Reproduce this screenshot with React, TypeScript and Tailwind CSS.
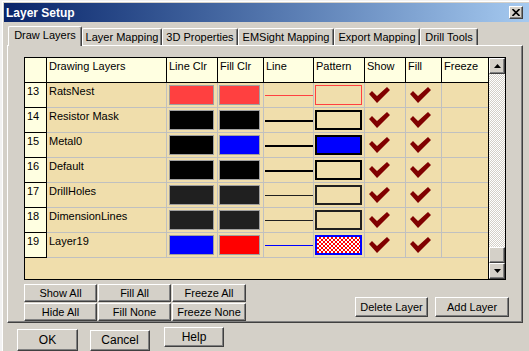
import React from "react";

const raised =
  "bg-[#D4D0C8] border border-t-white border-l-white border-r-[#404040] border-b-[#404040] shadow-[inset_-1px_-1px_0_#808080]";

type Row = {
  n: number;
  name: string;
  lc: string;
  fc: string;
  line: string;
  lineH: string;
  pat: "red" | "black" | "blue" | "dark" | "checker";
};

const rows: Row[] = [
  { n: 13, name: "RatsNest", lc: "#FF4040", fc: "#FF4040", line: "#FF4040", lineH: "h-[1px]", pat: "red" },
  { n: 14, name: "Resistor Mask", lc: "#000000", fc: "#000000", line: "#000000", lineH: "h-[2px]", pat: "black" },
  { n: 15, name: "Metal0", lc: "#000000", fc: "#0000FF", line: "#000000", lineH: "h-[2px]", pat: "blue" },
  { n: 16, name: "Default", lc: "#000000", fc: "#000000", line: "#000000", lineH: "h-[2px]", pat: "black" },
  { n: 17, name: "DrillHoles", lc: "#202020", fc: "#202020", line: "#202020", lineH: "h-[1px]", pat: "dark" },
  { n: 18, name: "DimensionLines", lc: "#202020", fc: "#202020", line: "#202020", lineH: "h-[1px]", pat: "dark" },
  { n: 19, name: "Layer19", lc: "#0000FF", fc: "#FF0000", line: "#0000FF", lineH: "h-[1px]", pat: "checker" },
];

function Check() {
  return (
    <svg width="22" height="17" viewBox="0 0 22 17" className="block">
      <path d="M0 7 L3 4 L8 9 L18 0 L21 3 L8 16 Z" fill="#800000" />
    </svg>
  );
}

function Pattern({ kind }: { kind: Row["pat"] }) {
  const base = "ml-[1px] mt-[2px] w-[47px] h-[20px]";
  if (kind === "red") return <div className={`${base} border border-[#FF4040]`} />;
  if (kind === "black") return <div className={`${base} border-2 border-black`} />;
  if (kind === "blue") return <div className={`${base} border-2 border-black bg-[#0000FF]`} />;
  if (kind === "dark") return <div className={`${base} border-2 border-[#202020]`} />;
  return (
    <div
      className={`${base} border-2 border-[#0000FF] bg-[conic-gradient(#ff0000_25%,#ffffff_0_50%,#ff0000_0_75%,#ffffff_0)] bg-[length:4px_4px]`}
    />
  );
}

function Btn({ className, children }: { className: string; children: React.ReactNode }) {
  return <div className={`${raised} flex items-center justify-center ${className}`}>{children}</div>;
}

function Tab({ sel, w, children }: { sel?: boolean; w: string; children: React.ReactNode }) {
  return (
    <div
      className={`${w} ${
        sel ? "h-[20px] -mb-[1px] relative z-10 pb-[3px]" : "h-[17px]"
      } bg-[#D4D0C8] border-t border-l border-r border-t-white border-l-white border-r-[#404040] shadow-[inset_-1px_0_0_#808080] rounded-t-[2px] flex items-center justify-center`}
    >
      {children}
    </div>
  );
}

const hdr = "h-[25px] bg-[#FFFFE1] border-b border-black px-[2px] pt-[2px]";
const cell = "h-[25px] border-b border-[#C0C0C0]";

export default function App() {
  return (
    <div className="w-[529px] h-[351px] overflow-hidden bg-[#F2F2F2] pt-[1px] pl-[2px] font-['Liberation_Sans',Arial,sans-serif] text-[11px] leading-[13px] text-black">
      <div className="h-[352px] bg-[#D4D0C8] border-t border-l border-white pt-[1px] pl-[1px] flex flex-col">
        {/* Title bar */}
        <div className="h-[19px] shrink-0 flex items-center bg-linear-to-r from-[#0A246A] to-[#A6CAF0] pl-[2px] pr-[6px]">
          <span className="text-white font-bold text-[12px] leading-[14px]">Layer Setup</span>
          <div className={`ml-auto w-[14px] h-[13px] ${raised} flex items-center justify-center`}>
            <svg width="8" height="7" viewBox="0 0 8 7">
              <path d="M0.5 0 L7.5 7 M7.5 0 L0.5 7" stroke="#000" strokeWidth="1.6" />
            </svg>
          </div>
        </div>

        {/* Tabs */}
        <div className="mt-[4px] ml-[4px] h-[19px] shrink-0 flex items-end">
          <Tab sel w="w-[74px]">Draw Layers</Tab>
          <Tab w="w-[80px]">Layer Mapping</Tab>
          <Tab w="w-[76px]">3D Properties</Tab>
          <Tab w="w-[96px]">EMSight Mapping</Tab>
          <Tab w="w-[86px]">Export Mapping</Tab>
          <Tab w="w-[58px]">Drill Tools</Tab>
        </div>

        {/* Panel */}
        <div className="ml-[3px] w-[516px] h-[278px] shrink-0 border border-t-white border-l-white border-r-[#404040] border-b-[#404040] shadow-[inset_-1px_-1px_0_#808080] pl-[16px] pt-[11px]">
          {/* Grid */}
          <div className="w-[482px] h-[223px] border border-black flex">
            <div className="w-[464px] border-r border-black flex flex-col bg-[#F0DEAC]">
              <div className="flex">
                <div className={`${hdr} w-[22px] border-r`} />
                <div className={`${hdr} w-[120px] border-r`}>Drawing Layers</div>
                <div className={`${hdr} w-[51px] border-r`}>Line Clr</div>
                <div className={`${hdr} w-[46px] border-r`}>Fill Clr</div>
                <div className={`${hdr} w-[50px] border-r`}>Line</div>
                <div className={`${hdr} w-[51px] border-r`}>Pattern</div>
                <div className={`${hdr} w-[41px] border-r`}>Show</div>
                <div className={`${hdr} w-[36px] border-r`}>Fill</div>
                <div className={`${hdr} w-[46px]`}>Freeze</div>
              </div>
              {rows.map((r) => (
                <div key={r.n} className="flex">
                  <div className="h-[25px] w-[22px] bg-[#FFFFE1] border-r border-b border-black px-[2px] pt-[2px]">
                    {r.n}
                  </div>
                  <div className={`${cell} w-[120px] border-r px-[2px] pt-[2px]`}>{r.name}</div>
                  <div className={`${cell} w-[51px] border-r`}>
                    <div className="ml-[2px] mt-[2px] w-[45px] h-[20px] border border-[#A0A0A0]" style={{ background: r.lc }} />
                  </div>
                  <div className={`${cell} w-[46px] border-r`}>
                    <div className="ml-[1px] mt-[2px] w-[41px] h-[20px] border border-[#A0A0A0]" style={{ background: r.fc }} />
                  </div>
                  <div className={`${cell} w-[50px] border-r pt-[12px] pl-[1px]`}>
                    <div className={`${r.lineH} w-full`} style={{ background: r.line }} />
                  </div>
                  <div className={`${cell} w-[51px] border-r`}>
                    <Pattern kind={r.pat} />
                  </div>
                  <div className={`${cell} w-[41px] border-r pl-[4px] pt-[4px]`}>
                    <Check />
                  </div>
                  <div className={`${cell} w-[36px] border-r pl-[4px] pt-[4px]`}>
                    <Check />
                  </div>
                  <div className={`${cell} w-[46px]`} />
                </div>
              ))}
              <div className="flex-1" />
            </div>
            {/* Scrollbar */}
            <div className="w-[16px] flex flex-col">
              <div className={`${raised} h-[16px] flex items-center justify-center`}>
                <svg width="7" height="4" viewBox="0 0 7 4">
                  <path d="M3.5 0 L7 4 L0 4 Z" fill="#000" />
                </svg>
              </div>
              <div className="flex-1 bg-[conic-gradient(#ffffff_25%,#D4D0C8_0_50%,#ffffff_0_75%,#D4D0C8_0)] bg-[length:2px_2px]" />
              <div className={`${raised} h-[16px]`} />
              <div className={`${raised} h-[16px] flex items-center justify-center`}>
                <svg width="7" height="4" viewBox="0 0 7 4">
                  <path d="M0 0 L7 0 L3.5 4 Z" fill="#000" />
                </svg>
              </div>
            </div>
          </div>

          {/* Buttons */}
          <div className="flex mt-[4px]">
            <div className="flex flex-col gap-[1px]">
              <div className="flex gap-[1px]">
                <Btn className="w-[73px] h-[18px]">Show All</Btn>
                <Btn className="w-[73px] h-[18px]">Fill All</Btn>
                <Btn className="w-[74px] h-[18px]">Freeze All</Btn>
              </div>
              <div className="flex gap-[1px]">
                <Btn className="w-[73px] h-[18px]">Hide All</Btn>
                <Btn className="w-[73px] h-[18px]">Fill None</Btn>
                <Btn className="w-[74px] h-[18px]">Freeze None</Btn>
              </div>
            </div>
            <div className="flex gap-[7px] ml-[109px] mt-[13px]">
              <Btn className="w-[73px] h-[20px]">Delete Layer</Btn>
              <Btn className="w-[74px] h-[20px]">Add Layer</Btn>
            </div>
          </div>
        </div>

        {/* Bottom buttons */}
        <div className="flex items-start ml-[13px] mt-[6px]">
          <Btn className="w-[61px] h-[22px] text-[12px]">OK</Btn>
          <Btn className="w-[60px] h-[21px] ml-[12px] mt-[1px] text-[12px]">Cancel</Btn>
          <Btn className="w-[60px] h-[20px] ml-[14px] -mt-[2px] text-[12px]">Help</Btn>
        </div>
      </div>
    </div>
  );
}
